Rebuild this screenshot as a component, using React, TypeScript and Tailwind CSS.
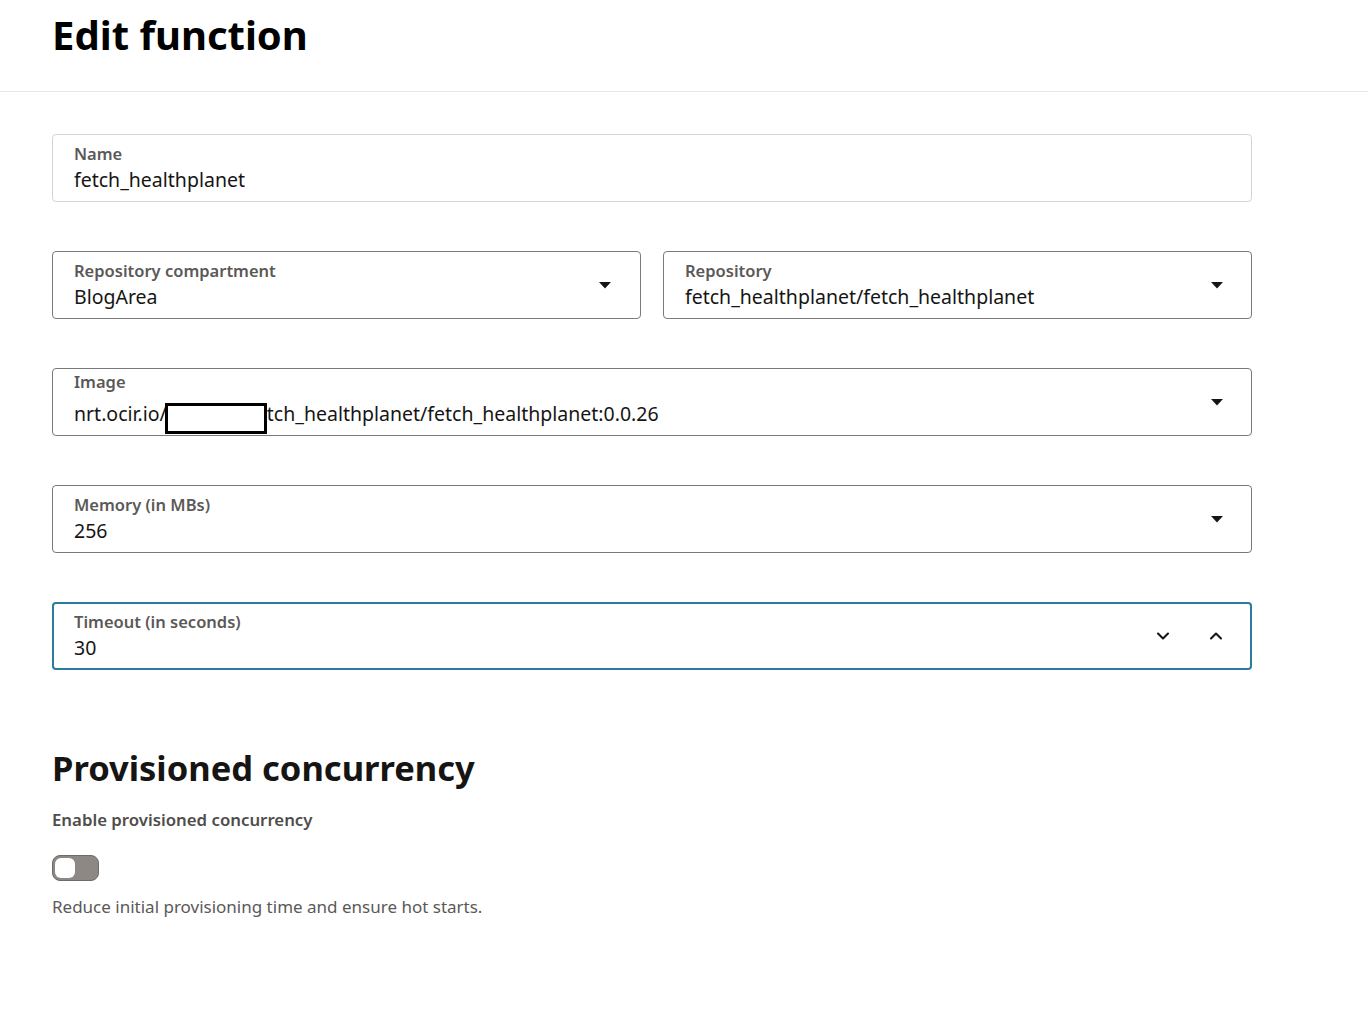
import { ChevronDown, ChevronUp } from 'lucide-react';

const font = { fontFamily: '"Segoe UI", "Noto Sans", "Open Sans", sans-serif' };

function Caret() {
  return (
    <svg width="14" height="8" viewBox="0 0 14 8" className="shrink-0">
      <path d="M1 1h12L7 7.5z" fill="#161513" />
    </svg>
  );
}

function Field({
  label,
  value,
  variant = 'select',
  children,
}: {
  label: string;
  value: React.ReactNode;
  variant?: 'text' | 'select' | 'focus';
  children?: React.ReactNode;
}) {
  const border =
    variant === 'text'
      ? 'border border-[#d6d4d2]'
      : variant === 'focus'
      ? 'border-2 border-[#2c7c9f]'
      : 'border border-[#7c7a78]';
  return (
    <div className={`flex items-center h-[68px] rounded-[4px] bg-white ${border}`}>
      <div className={`flex-1 min-w-0 ${variant === 'focus' ? 'pl-[20px]' : 'pl-[21px]'}`}>
        <div className="text-[16.5px] leading-[22px] font-semibold text-[#5b5957]">{label}</div>
        <div className="text-[19.5px] leading-[26px] mt-[2px] text-[#161513] whitespace-nowrap">{value}</div>
      </div>
      {children}
    </div>
  );
}

export default function App() {
  return (
    <div className="min-h-[1023px] bg-white" style={font}>
      <header className="h-[92px] border-b border-[#e8e7e6] pl-[52px] flex items-start">
        <h1 className="text-[40px] leading-[70px] font-bold text-black">Edit function</h1>
      </header>

      <main className="pl-[52px] pt-[42px] w-[1252px] flex flex-col">
        <Field label="Name" value="fetch_healthplanet" variant="text" />

        <div className="mt-[49px] grid grid-cols-2 gap-[22px]">
          <Field label="Repository compartment" value="BlogArea">
            <div className="pr-[28px]">
              <Caret />
            </div>
          </Field>
          <Field label="Repository" value="fetch_healthplanet/fetch_healthplanet">
            <div className="pr-[27px]">
              <Caret />
            </div>
          </Field>
        </div>

        <div className="mt-[49px]">
          <Field
            label="Image"
            value={
              <span className="inline-flex items-center">
                nrt.ocir.io/
                <span className="inline-block w-[102px] h-[31px] border-[3px] border-black bg-white -ml-[2px] mt-[8px]" />
                tch_healthplanet/fetch_healthplanet:0.0.26
              </span>
            }
          >
            <div className="pr-[27px]">
              <Caret />
            </div>
          </Field>
        </div>

        <div className="mt-[49px]">
          <Field label="Memory (in MBs)" value="256">
            <div className="pr-[27px]">
              <Caret />
            </div>
          </Field>
        </div>

        <div className="mt-[49px]">
          <Field label="Timeout (in seconds)" value="30" variant="focus">
            <div className="flex items-center gap-[33px] pr-[24px]">
              <ChevronDown size={20} strokeWidth={2.5} color="#161513" />
              <ChevronUp size={20} strokeWidth={2.5} color="#161513" />
            </div>
          </Field>
        </div>

        <h2 className="mt-[73px] text-[34.5px] leading-[50px] font-bold text-[#161513]">Provisioned concurrency</h2>

        <div className="mt-[16px] text-[16.8px] leading-[22px] font-semibold text-[#4f4d4b]">
          Enable provisioned concurrency
        </div>

        <div className="mt-[24px] w-[47px] h-[26px] rounded-[8px] bg-[#8d8883] border border-[#6f6b67] p-[2px] flex items-center">
          <div className="w-[20px] h-[20px] rounded-[6px] bg-white" />
        </div>

        <p className="mt-[14px] text-[17px] leading-[24px] text-[#5b5957]">
          Reduce initial provisioning time and ensure hot starts.
        </p>
      </main>
    </div>
  );
}
